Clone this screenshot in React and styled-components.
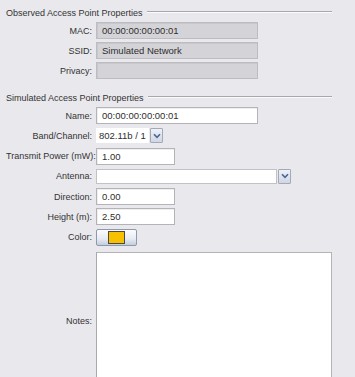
import React from 'react'
import styled, { createGlobalStyle } from 'styled-components'

const GlobalStyle = createGlobalStyle`
  body {
    margin: 0;
    background: #e9e8ed;
    font-family: "Liberation Sans", Arial, sans-serif;
    font-size: 9px;
    color: #333333;
  }
`

const Panel = styled.div`
  padding: 5px 23px 0 6px;
  height: 377px;
  overflow: hidden;
`

const Section = styled.div`
  margin-bottom: ${(p) => p.gap || 0}px;
`

const Heading = styled.div`
  display: flex;
  align-items: center;
  gap: 4px;
  height: 16px;
  margin-bottom: 1px;

  &::after {
    content: '';
    flex: 1;
    height: 1px;
    background: #a8a7ad;
    border-bottom: 1px solid #fbfbfd;
    margin-top: -3px;
  }
`

const Form = styled.div`
  display: grid;
  grid-template-columns: 86px 1fr;
  column-gap: 4px;
  row-gap: ${(p) => p.rowGap || 3}px;
`

const Label = styled.label`
  text-align: right;
  align-self: center;
  white-space: nowrap;
`

const Field = styled.div`
  box-sizing: border-box;
  width: ${(p) => p.w}px;
  height: 17px;
  padding: 0 5px;
  display: flex;
  align-items: center;
  background: ${(p) => (p.disabled ? '#d4d3d8' : '#ffffff')};
  border: 1px solid ${(p) => (p.disabled ? '#bdbcc1' : '#b4b3b8')};
  box-shadow: inset 1px 1px 0 ${(p) => (p.disabled ? '#c8c7cc' : '#efefef')};
  font-size: 9.5px;
  color: #2e2e2e;
`

const Combo = styled.div`
  display: flex;
  align-items: center;
  width: ${(p) => p.w}px;
  height: 17px;
`

const ComboText = styled.div`
  box-sizing: border-box;
  flex: 1;
  height: 15px;
  padding: 0 2px;
  display: flex;
  align-items: center;
  background: #ffffff;
  border: 1px solid ${(p) => (p.bordered ? '#c2c1c6' : '#ffffff')};
  font-size: 9.5px;
  color: #2e2e2e;
`

const DropButton = styled.div`
  box-sizing: border-box;
  width: 13px;
  height: 15px;
  margin-left: 1px;
  display: flex;
  align-items: center;
  justify-content: center;
  background: linear-gradient(#eef1f7, #cfd6e4);
  border: 1px solid #a4a9b7;
  border-radius: 1px;
`

const ColorButton = styled.div`
  box-sizing: border-box;
  width: 41px;
  height: 17px;
  display: flex;
  align-items: center;
  justify-content: center;
  background: linear-gradient(#fbfcfe, #e6ebf3 60%, #c4cddd);
  border: 1px solid #8f99ad;
  border-radius: 2px;
`

const Swatch = styled.div`
  width: 15px;
  height: 11px;
  background: ${(p) => p.color};
  border: 1px solid #4a4a4a;
`

const Notes = styled.div`
  box-sizing: border-box;
  width: 236px;
  height: 138px;
  margin-top: 3px;
  background: #ffffff;
  border: 1px solid #b4b3b8;
  border-left-color: #a8a8ad;
`

const NotesLabel = styled(Label)`
  margin-top: 3px;
`

const Chevron = () => (
  <svg width="8" height="6" viewBox="0 0 8 6">
    <path d="M1 1.2 L4 4.4 L7 1.2" fill="none" stroke="#4b6796" strokeWidth="1.6" />
  </svg>
)

export default function App() {
  return (
    <Panel>
      <GlobalStyle />
      <Section gap={11}>
        <Heading>Observed Access Point Properties</Heading>
        <Form>
          <Label>MAC:</Label>
          <Field disabled w={162}>00:00:00:00:00:01</Field>
          <Label>SSID:</Label>
          <Field disabled w={162}>Simulated Network</Field>
          <Label>Privacy:</Label>
          <Field disabled w={162} />
        </Form>
      </Section>
      <Section>
        <Heading>Simulated Access Point Properties</Heading>
        <Form rowGap={3.3}>
          <Label>Name:</Label>
          <Field w={162}>00:00:00:00:00:01</Field>
          <Label>Band/Channel:</Label>
          <Combo w={67}>
            <ComboText>802.11b / 1</ComboText>
            <DropButton><Chevron /></DropButton>
          </Combo>
          <Label>Transmit Power (mW):</Label>
          <Field w={79}>1.00</Field>
          <Label>Antenna:</Label>
          <Combo w={195}>
            <ComboText bordered />
            <DropButton><Chevron /></DropButton>
          </Combo>
          <Label>Direction:</Label>
          <Field w={79}>0.00</Field>
          <Label>Height (m):</Label>
          <Field w={79}>2.50</Field>
          <Label>Color:</Label>
          <ColorButton><Swatch color="#f7c100" /></ColorButton>
          <NotesLabel>Notes:</NotesLabel>
          <Notes />
        </Form>
      </Section>
    </Panel>
  )
}
